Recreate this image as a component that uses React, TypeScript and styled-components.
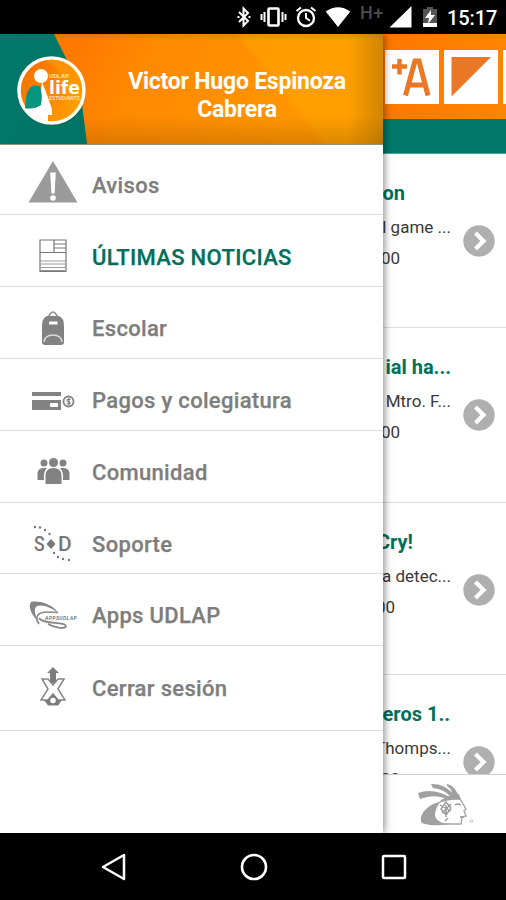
import React from "react";
import styled, { createGlobalStyle } from "styled-components";

const GlobalStyle = createGlobalStyle`
  body { margin: 0; background: #000; font-family: Roboto, "Liberation Sans", sans-serif; }
  *, *::before, *::after { box-sizing: border-box; }
  svg { display: block; flex: none; }
`;

const Phone = styled.div`
  width: 506px;
  height: 900px;
  display: flex;
  flex-direction: column;
  overflow: hidden;
  background: #000;
`;

const StatusBar = styled.header`
  height: 34px;
  flex: none;
  display: flex;
  justify-content: flex-end;
  align-items: center;
  padding-right: 10px;
  color: #fff;
`;

const StatusGlyph = styled.svg<{ $gap?: number }>`
  margin-left: ${(p) => p.$gap ?? 0}px;
`;

const Network = styled.span`
  width: 25px;
  margin: 0 4px 9px 9px;
  font-size: 18px;
  line-height: 18px;
  font-weight: 500;
  letter-spacing: 0.6px;
  color: #4c4c4c;
`;

const Clock = styled.span`
  width: 49px;
  margin-left: 9px;
  padding-top: 2px;
  font-size: 20px;
  line-height: 24px;
  font-weight: 500;
  letter-spacing: -0.1px;
  white-space: nowrap;
`;

const Screen = styled.div`
  height: 799px;
  flex: none;
  display: grid;
  grid-template-columns: 383px 123px;
  background: #fff;
`;

const Drawer = styled.aside`
  z-index: 1;
  display: flex;
  flex-direction: column;
  background: #fff;
  box-shadow: 1px 0 8px rgba(0, 0, 0, 0.5);
  clip-path: inset(0 -12px 0 0);
`;

const Profile = styled.div`
  height: 111px;
  flex: none;
  display: grid;
  grid-template-columns: 103px 268px;
  align-items: center;
  border-bottom: 1px solid #8d9478;
  background:
    linear-gradient(90deg, transparent 348px, rgba(110, 80, 0, 0.32) 383px),
    linear-gradient(180deg, rgba(80, 35, 0, 0.12), transparent 6px, transparent 82px, rgba(80, 45, 0, 0.2) 111px),
    linear-gradient(52deg, transparent 68%, rgba(255, 176, 0, 0.35) 70%),
    linear-gradient(118deg, #ff7a00 20%, #ff8900 36%, #ff9500 75%);
`;

const LogoPanel = styled.div`
  width: 88px;
  height: 110px;
  background: linear-gradient(120deg, #00796a, #007365);
  clip-path: polygon(0 0, 54px 0, 66px 24px, 80px 54px, 87px 110px, 0 110px);
`;

const LogoWrap = styled.div`
  position: relative;
  width: 103px;
  height: 110px;
`;

const LogoMark = styled.div`
  position: absolute;
  left: 15px;
  top: 20px;
`;

const UserName = styled.h1`
  margin: 14px 0 0;
  color: #fff;
  font-size: 23px;
  line-height: 28.5px;
  font-weight: 700;
  letter-spacing: -0.22px;
  text-align: center;
`;

const Menu = styled.nav`
  display: flex;
  flex-direction: column;
`;

const MenuRow = styled.div<{ $active?: boolean; $height: number }>`
  height: ${(p) => p.$height}px;
  display: grid;
  grid-template-columns: 92px 1fr;
  align-items: center;
  border-bottom: 1px solid #dcdcdc;
  color: ${(p) => (p.$active ? "#006f5b" : "#7d7d7d")};
  font-size: 22px;
  font-weight: 500;
  letter-spacing: 0.32px;
`;

const MenuIcon = styled.span<{ $drop: number }>`
  display: flex;
  justify-content: center;
  padding-left: 14px;
  padding-top: ${(p) => Math.max(0, p.$drop) * 2}px;
  padding-bottom: ${(p) => Math.max(0, -p.$drop) * 2}px;
`;

const MenuLabel = styled.span<{ $drop: number }>`
  padding-top: ${(p) => p.$drop * 2}px;
  -webkit-text-stroke: 0.25px currentColor;
`;

const Feed = styled.main`
  min-width: 0;
  display: grid;
  grid-template-rows: 85px 35px 620px 59px;
  overflow: hidden;
`;

const Toolbar = styled.div`
  display: flex;
  gap: 5px;
  align-items: flex-start;
  padding: 16px 0 0 2px;
  overflow: hidden;
  background: linear-gradient(90deg, #ff7800, #ff8500);
`;

const Tool = styled.div`
  width: 54px;
  height: 54px;
  flex: none;
  background: #fff;
`;

const Band = styled.div`
  background: #00796b;
  border-bottom: 1px solid #54a096;
`;

const List = styled.div`
  overflow: hidden;
`;

const Article = styled.article<{ $height: number }>`
  height: ${(p) => p.$height}px;
  display: grid;
  grid-template-columns: 69px 54px;
  border-bottom: 1px solid #dcdcdc;
`;

const Copy = styled.div`
  display: flex;
  flex-direction: column;
  padding-top: 24px;
`;

const Line = styled.div<{ $w: number; $heading?: boolean }>`
  width: ${(p) => p.$w}px;
  height: ${(p) => (p.$heading ? 29 : 31)}px;
  margin-bottom: ${(p) => (p.$heading ? 4 : 0)}px;
  display: flex;
  justify-content: flex-end;
  align-items: center;
  overflow: hidden;
  white-space: nowrap;
  color: ${(p) => (p.$heading ? "#007158" : "#393939")};
  font-size: ${(p) => (p.$heading ? 20 : 17)}px;
  font-weight: ${(p) => (p.$heading ? 700 : 400)};
`;

const Go = styled.div`
  padding: 71px 0 0 11px;
`;

const Footer = styled.footer`
  display: flex;
  justify-content: center;
  padding: 7px 0 0 3px;
  border-top: 1px solid #cfcfcf;
  background: #fff;
`;

const NavBar = styled.footer`
  flex: 1;
  display: grid;
  grid-template-columns: repeat(3, 140.5px);
  justify-content: center;
  align-items: center;
  justify-items: center;
  padding-left: 1px;
`;

const StatusIcons = () => (
  <>
    <StatusGlyph width="14" height="22" viewBox="0 0 14 22" fill="none" stroke="#fff" strokeWidth="2">
      <path d="M2 6l9 9-4.5 4.5v-17L11 7l-9 9" />
      <path d="M.5 11h2M11.5 11h2" />
    </StatusGlyph>
    <StatusGlyph $gap={9} width="27" height="22" viewBox="0 0 27 22" fill="none" stroke="#fff" strokeWidth="2">
      <rect x="8.5" y="2.5" width="10" height="17" rx="1" strokeWidth="2.6" />
      <path d="M4.5 6v10M1.5 8v6M22.5 6v10M25.5 8v6" />
    </StatusGlyph>
    <StatusGlyph $gap={8} width="22" height="22" viewBox="0 0 22 22" fill="none" stroke="#fff" strokeWidth="2.3">
      <circle cx="11" cy="12" r="8" />
      <path d="M11 7v5l4 2.8M1.5 5L6 1.5M20.5 5L16 1.5" strokeWidth="2" />
    </StatusGlyph>
    <StatusGlyph $gap={8} width="26" height="22" viewBox="0 0 26 22" fill="#fff">
      <path d="M.7 5.5Q13-3 25.3 5.5L13 21Z" />
    </StatusGlyph>
  </>
);

const LifeLogo = () => (
  <svg width="72" height="72" viewBox="0 0 72 72">
    <defs>
      <linearGradient id="disc" x1="0" x2="1" y1="0" y2="0.7">
        <stop stopColor="#f36c00" />
        <stop offset=".65" stopColor="#ff8a00" />
        <stop offset="1" stopColor="#ff9e00" />
      </linearGradient>
      <clipPath id="inside"><circle cx="36.5" cy="36.5" r="31" /></clipPath>
    </defs>
    <circle cx="36.5" cy="37.5" r="34.5" fill="#00463b" opacity=".3" />
    <circle cx="36.5" cy="36.5" r="32.5" fill="url(#disc)" stroke="#fffdf4" strokeWidth="3.6" />
    <g clipPath="url(#inside)">
      <path d="M23 4Q45 10 51 36T42 69H65V4Z" fill="#ffa000" opacity=".5" />
      <path d="M27 28Q30 35 32 41L37 55 37 61H33V70H18L7 56Q21 54 25 43Z" fill="#fff" />
    </g>
    <circle cx="26" cy="22" r="7" fill="#fff" />
    <path d="M25 32Q13 29 11 44L10 54Q19 56 26 51Q28 42 25 32Z" fill="#079580" />
    <text x="34" y="24" fontSize="5.5" fontWeight="700" fill="#ffdeb2" textLength="20" lengthAdjust="spacingAndGlyphs">UDLAP</text>
    <text x="34" y="39.5" fontFamily="DejaVu Sans" fontSize="17" fontWeight="700" fill="#fff" textLength="31" lengthAdjust="spacingAndGlyphs">life</text>
    <text x="34" y="45.5" fontSize="5" fontWeight="700" fill="#ffdeb2" textLength="31" lengthAdjust="spacingAndGlyphs">ESTUDIANTE</text>
  </svg>
);

const WarningIcon = () => (
  <svg width="50" height="44" viewBox="0 0 50 44">
    <path d="M25 1L49.5 42.5H.5Z" fill="#9b9b9b" />
    <path d="M22.2 12.5h5.6l-1.2 21h-3.2Z" fill="#fff" /><circle cx="25" cy="38" r="2.8" fill="#fff" />
  </svg>
);

const NewsIcon = () => (
  <svg width="28" height="34" viewBox="0 0 28 34" fill="none" stroke="#777" strokeWidth="1.2">
    <path d="M1 1H27V32.5H1ZM1 13.5H27M15 1V13.5M15 5H27M15 9H27" />
    <path d="M1 22H27M1 25H27M1 28.5H27M1 31.5H27" stroke="#999" />
  </svg>
);

const BagIcon = () => (
  <svg width="24" height="36" viewBox="0 0 24 36">
    <path d="M7 8Q12-4 17 8" fill="none" stroke="#888" strokeWidth="1.5" />
    <path d="M6 6H18Q23 8 23 16V32Q23 35 20 35H4Q1 35 1 32V16Q1 8 6 6Z" fill="#828282" />
    <path d="M8 11.5H16.5V14.5H8Z" fill="#fff" />
    <path d="M3 32Q4 25 12 25T21 32" fill="none" stroke="#ddd" strokeWidth="1.4" />
  </svg>
);

const PaymentIcon = () => (
  <svg width="43" height="20" viewBox="0 0 43 20">
    <path d="M0 1H29V5H0ZM0 9H29V19H0Z" fill="#828282" />
    <rect x="18" y="12" width="8" height="4" rx="1" fill="#fff" />
    <circle cx="36.5" cy="10.5" r="5" fill="#fff" stroke="#828282" strokeWidth="1.8" />
    <path d="M38.5 8.5h-3q-1 1 0 1.8l2 .5q1 1 0 2h-3M37 7v7" fill="none" stroke="#777" strokeWidth="1.1" />
  </svg>
);

const PeopleIcon = () => (
  <svg width="33" height="28" viewBox="0 0 33 28" fill="#828282">
    <circle cx="7" cy="6" r="3.5" /><circle cx="26" cy="6" r="3.5" />
    <path d="M.5 23V16Q1 11 7 11H10Q6 15 7 23ZM32.5 23V16Q32 11 26 11H23Q27 15 26 23Z" />
    <circle cx="16.5" cy="5.5" r="4.5" />
    <path d="M8.5 27V18Q9 11 16.5 11T24.5 18V27Z" />
  </svg>
);

const SupportIcon = () => (
  <svg width="40" height="38" viewBox="0 0 40 38" fill="#777">
    <text x="1" y="27" fontSize="21" textLength="11" lengthAdjust="spacingAndGlyphs">S</text>
    <text x="25" y="27" fontSize="21" textLength="14" lengthAdjust="spacingAndGlyphs">D</text>
    <path d="M18 15L22.5 20 18 25 13.5 20Z" />
    {[[2, 3], [7, 3.5], [12, 6], [16.5, 10], [21, 29], [25, 33], [30, 35], [36, 36]].map(([x, y]) => (
      <circle key={x} cx={x} cy={y} r="1.2" />
    ))}
  </svg>
);

const AppsIcon = () => (
  <svg width="49" height="30" viewBox="0 0 49 30">
    <path d="M29 13C25 5 10 0 2 2C-1 6 2 15 10 22C6 15 4 9 8 6C14 4 23 8 29 13Z" fill="#858585" />
    <path d="M10 24C5 17 9 12 18 12Q24 12 29 12.5M10 18C14 25 36 21 37 26C36 30 24 27 19 24" fill="none" stroke="#888" strokeWidth="1.7" />
    <text x="16" y="19.5" fontSize="5.5" fontWeight="700" fontStyle="italic" fill="#7c7c7c" textLength="32" lengthAdjust="spacingAndGlyphs">APPSUDLAP</text>
  </svg>
);

const LogoutIcon = () => (
  <svg width="26" height="40" viewBox="0 0 26 40">
    <path d="M13 0L19 6H16V16H10V6H7Z" fill="#7d7d7d" />
    <path d="M2 12H8L13 18 18 12H24L18 22 25 33H18L13 27 8 33H1L8 22Z" fill="#fff" stroke="#858585" strokeWidth="1.5" />
    <path d="M4 33H8L10 30A4 4 0 0 1 16 30L18 33H22L18 38.5H8Z" fill="#7c7c7c" />
    <circle cx="13" cy="33.5" r="2.8" fill="#fff" />
  </svg>
);

const MascotIcon = () => (
  <svg width="58" height="46" viewBox="0 0 58 46">
    <g fill="#a0a0a0">
      <path d="M1 11Q17 5 36 17L32 18Q18 11 3 17Z" />
      <path d="M14 2Q28 1 38 14L34 15Q27 7 16 6Z" />
      <path d="M30 2Q38 3 43 17L35 15Q37 9 30 4Z" />
      <path d="M23 20C12 21 0 34 5 41Q15 45 34 42Q9 41 23 20Z" />
      <path d="M42 12Q28 13 20 22Q31 17 44 18Z" />
    </g>
    <path d="M42 15L46 22 49 27 47 29 49 34 45 35 44 42H30Q18 42 14 39" fill="none" stroke="#a6a6a6" strokeWidth="1.4" />
    <path d="M38 23Q41 21 44 23M43 35H47M29 20L34 26 29 33 24 27ZM29 23V35M23 23L34 29M34 22L25 31M31 36L28 39" fill="none" stroke="#999" strokeWidth="1.4" />
    <circle cx="54.5" cy="39" r="1.3" fill="none" stroke="#aaa" strokeWidth=".7" />
  </svg>
);

const menuItems = [
  { label: "Avisos", Icon: WarningIcon, height: 70, iconDrop: 2, drop: 6 },
  { label: "ÚLTIMAS NOTICIAS", Icon: NewsIcon, height: 72, iconDrop: 5, drop: 7, active: true },
  { label: "Escolar", Icon: BagIcon, height: 72, iconDrop: 5, drop: 6 },
  { label: "Pagos y colegiatura", Icon: PaymentIcon, height: 72, iconDrop: 6, drop: 6 },
  { label: "Comunidad", Icon: PeopleIcon, height: 72, iconDrop: 4, drop: 6 },
  { label: "Soporte", Icon: SupportIcon, height: 71, iconDrop: 5, drop: 6 },
  { label: "Apps UDLAP", Icon: AppsIcon, height: 72, iconDrop: 5, drop: 6 },
  { label: "Cerrar sesión", Icon: LogoutIcon, height: 85, iconDrop: -1, drop: 0 },
];

const articles = [
  { title: ["on", 22], desc: "el game ...", time: ["00", 17], height: 174 },
  { title: ["ial ha...", 68], desc: "Mtro. F...", time: ["00", 17], height: 175 },
  { title: ["Cry!", 30], desc: "na detec...", time: ["00", 12], height: 172 },
  { title: ["eros 1..", 67], desc: "Thomps...", time: ["00", 17], height: 174 },
] as const;

export default function App() {
  return (
    <Phone>
      <GlobalStyle />
      <StatusBar>
        <StatusIcons />
        <Network>H+</Network>
        <StatusGlyph width="23" height="22" viewBox="0 0 23 22"><path d="M22.5 0V21.5H.5Z" fill="#fff" /></StatusGlyph>
        <StatusGlyph $gap={10} width="16" height="22" viewBox="0 0 16 22">
          <path d="M5 1H11V3H15V21H1V3H5Z" fill="#555" />
          <path d="M1 17H15V21H1Z" fill="#fff" />
          <path d="M9 4L3 12H7L6 18L13 9H9Z" fill="#fff" />
        </StatusGlyph>
        <Clock>15:17</Clock>
      </StatusBar>
      <Screen>
        <Drawer>
          <Profile>
            <LogoWrap>
              <LogoPanel />
              <LogoMark><LifeLogo /></LogoMark>
            </LogoWrap>
            <UserName>Victor Hugo Espinoza Cabrera</UserName>
          </Profile>
          <Menu>
            {menuItems.map(({ label, Icon, height, iconDrop, drop, active }) => (
              <MenuRow key={label} $height={height} $active={active}>
                <MenuIcon $drop={iconDrop}><Icon /></MenuIcon>
                <MenuLabel $drop={drop}>{label}</MenuLabel>
              </MenuRow>
            ))}
          </Menu>
        </Drawer>
        <Feed>
          <Toolbar>
            <Tool>
              <svg width="54" height="54" viewBox="0 0 54 54" fill="none" stroke="#ea7725">
                <path d="M7 16.5H22M14.5 9V24.5" strokeWidth="4.5" />
                <path d="M20.5 45.5L30 11H34L43 45.5M24 35H40" strokeWidth="5" />
              </svg>
            </Tool>
            <Tool>
              <svg width="54" height="54" viewBox="0 0 54 54"><path d="M7.5 7H47L7.5 46.5Z" fill="#ea7725" /></svg>
            </Tool>
            <Tool />
          </Toolbar>
          <Band />
          <List>
            {articles.map((a) => (
              <Article key={a.desc} $height={a.height}>
                <Copy>
                  <Line $w={a.title[1]} $heading>{a.title[0]}</Line>
                  <Line $w={68}>{a.desc}</Line>
                  <Line $w={a.time[1]}>{a.time[0]}</Line>
                </Copy>
                <Go>
                  <svg width="32" height="32" viewBox="0 0 32 32">
                    <circle cx="16" cy="16" r="15.7" fill="#afafaf" />
                    <path d="M12.5 8L20.5 16L12.5 24" fill="none" stroke="#fff" strokeWidth="4.2" />
                  </svg>
                </Go>
              </Article>
            ))}
          </List>
          <Footer><MascotIcon /></Footer>
        </Feed>
      </Screen>
      <NavBar>
        <svg width="26" height="28" viewBox="0 0 26 28"><path d="M3 14L24 2V26Z" fill="none" stroke="#fff" strokeWidth="2.5" strokeLinejoin="round" /></svg>
        <svg width="28" height="28" viewBox="0 0 28 28"><circle cx="14" cy="14" r="12" fill="none" stroke="#fff" strokeWidth="2.6" /></svg>
        <svg width="26" height="26" viewBox="0 0 26 26"><rect x="2" y="2" width="22" height="22" rx="1" fill="none" stroke="#fff" strokeWidth="2.5" /></svg>
      </NavBar>
    </Phone>
  );
}
